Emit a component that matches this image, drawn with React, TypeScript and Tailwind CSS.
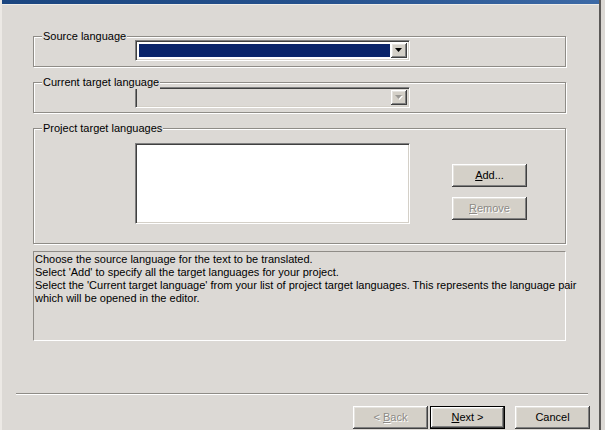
const raised =
  "bg-[#d4d0c8] shadow-[inset_-1px_-1px_0_#404040,inset_1px_1px_0_#ffffff,inset_-2px_-2px_0_#808080,inset_2px_2px_0_#e4e2de]";
const sunken =
  "border border-[#808080] border-b-white border-r-white shadow-[inset_1px_1px_0_#404040,inset_-1px_-1px_0_#d4d0c8]";
const disabledText = "text-[#8c8a86] [text-shadow:1px_1px_0_#ffffff]";

function GroupBox({
  label,
  className,
  children,
}: {
  label: string;
  className: string;
  children?: React.ReactNode;
}) {
  return (
    <div
      className={
        "relative w-[533px] border border-[#8f8c87] shadow-[inset_1px_1px_0_#ffffff,1px_1px_0_#ffffff] " +
        className
      }
    >
      <span className="absolute -top-[7px] left-[8px] bg-[#dcd9d5] px-[1px] leading-[13px]">
        {label}
      </span>
      {children}
    </div>
  );
}

function Arrow({ disabled }: { disabled?: boolean }) {
  return (
    <svg width="8" height="5" viewBox="0 0 8 5">
      {disabled && <path d="M1 1h7L4.5 5z" fill="#ffffff" />}
      <path d="M0 0h7L3.5 4z" fill={disabled ? "#9a9894" : "#000000"} />
    </svg>
  );
}

function Combo({ disabled }: { disabled?: boolean }) {
  return (
    <div className={"flex h-[21px] w-[275px] p-[2px] " + sunken + (disabled ? " bg-[#dcd9d5]" : " bg-white")}>
      <div className={"flex-1 " + (disabled ? "" : "m-[1px] bg-[#0a246a]")} />
      <div className={"flex w-[16px] items-center justify-center " + raised}>
        <Arrow disabled={disabled} />
      </div>
    </div>
  );
}

function Button({
  children,
  disabled,
  isDefault,
}: {
  children: React.ReactNode;
  disabled?: boolean;
  isDefault?: boolean;
}) {
  return (
    <div
      className={
        "flex h-[23px] w-[75px] items-center justify-center " +
        (isDefault ? "border border-black " : "") +
        raised +
        (disabled ? " " + disabledText : "")
      }
    >
      {children}
    </div>
  );
}

export default function App() {
  return (
    <div className="flex h-[430px] w-[605px] overflow-hidden bg-[#dcd9d5] font-['Liberation_Sans',Arial,sans-serif] text-[11px] leading-[13px] text-black">
      <div className="flex w-[601px] flex-col border-l-[2px] border-r-[2px] border-l-[#ece9e5] border-r-[#5a5856]">
        <div className="h-[4px] bg-gradient-to-r from-[#1b4680] via-[#24508c] to-[#3d6aa6]" />
        <div className="h-[1px] bg-[#eeece8]" />

        <div className="flex flex-col pl-[31px]">
          <GroupBox label="Source language" className="mt-[31px] h-[31px] pl-[101px] pt-[3px]">
            <Combo />
          </GroupBox>

          <GroupBox label="Current target language" className="mt-[15px] h-[31px] pl-[101px] pt-[4px]">
            <Combo disabled />
          </GroupBox>

          <GroupBox label="Project target languages" className="mt-[15px] flex h-[116px] pl-[101px] pt-[14px]">
            <div className={"h-[81px] w-[275px] bg-white " + sunken} />
            <div className="ml-[42px] mt-[21px] flex flex-col gap-[10px]">
              <Button>
                <span>
                  <u>A</u>dd...
                </span>
              </Button>
              <Button disabled>
                <span>
                  <u>R</u>emove
                </span>
              </Button>
            </div>
          </GroupBox>

          <div className="mt-[7px] h-[90px] w-[533px] border border-[#8f8c87] border-b-white border-r-white px-[1px] pt-[1px] whitespace-nowrap">
            Choose the source language for the text to be translated.
            <br />
            Select 'Add' to specify all the target languages for your project.
            <br />
            Select the 'Current target language' from your list of project target languages. This represents the language pair
            <br />
            which will be opened in the editor.
          </div>
        </div>

        <div className="ml-[14px] mt-[52px] h-[2px] w-[572px] border-t border-b border-t-[#8f8c87] border-b-white" />

        <div className="mt-[11px] flex pl-[351px]">
          <Button disabled>
            <span>
              &lt; <u>B</u>ack
            </span>
          </Button>
          <div className="ml-[2px]">
            <Button isDefault>
              <span>
                <u>N</u>ext &gt;
              </span>
            </Button>
          </div>
          <div className="ml-[10px]">
            <Button>Cancel</Button>
          </div>
        </div>
      </div>
    </div>
  );
}
